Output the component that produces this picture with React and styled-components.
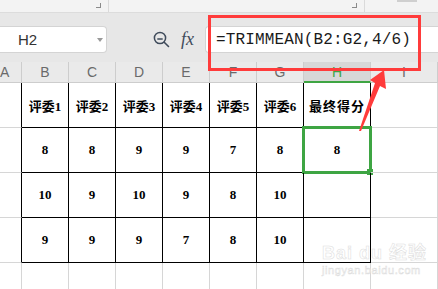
import React from "react";
import styled, { createGlobalStyle } from "styled-components";

const GlobalStyle = createGlobalStyle`
  html, body { margin: 0; padding: 0; background: #ffffff; }
  body { font-family: "Liberation Sans", Arial, sans-serif; }
`;

const Page = styled.div`
  position: relative;
  width: 438px;
  height: 289px;
  overflow: hidden;
  background: #ffffff;
`;

const TopStrip = styled.div`
  display: flex;
  height: 13px;
  box-sizing: border-box;
  background: #f3f3f3;
  border-bottom: 1px solid #dcdcdc;
`;

const RibbonGroup = styled.div`
  position: relative;
  width: ${(p) => p.$w}px;
  flex: none;
  box-sizing: border-box;
  border-right: ${(p) => (p.$divider ? "1px solid #dadada" : "none")};
  display: flex;
  justify-content: flex-end;
  align-items: flex-start;
  padding-right: 7px;
  padding-top: 3px;
`;

const LauncherMark = styled.span`
  width: 4px;
  height: 4px;
  border-right: 1px solid #8a8a8a;
  border-bottom: 1px solid #8a8a8a;
`;

const TopTab = styled.div`
  width: 20px;
  height: 2px;
  margin-left: 32px;
  background: #cfcfcf;
`;

const FormulaBar = styled.div`
  display: flex;
  align-items: flex-start;
  height: 49px;
  box-sizing: border-box;
  padding-top: 13px;
  background: #e7e7e7;
`;

const NameBox = styled.div`
  position: relative;
  width: 107px;
  height: 27px;
  box-sizing: border-box;
  background: #ffffff;
  border: 1px solid #d4d4d4;
  border-left: none;
  border-radius: 0 4px 4px 0;
  display: flex;
  align-items: center;
  padding-left: 18px;
  font-family: "Liberation Sans", Arial, sans-serif;
  font-size: 15px;
  color: #333;
`;

const DropArrow = styled.span`
  position: absolute;
  right: 3px;
  top: 11px;
  width: 0;
  height: 0;
  border-left: 3px solid transparent;
  border-right: 3px solid transparent;
  border-top: 4px solid #9a9a9a;
`;

const Tools = styled.div`
  display: flex;
  align-items: center;
  height: 27px;
  gap: 11px;
  padding-left: 46px;
  width: 98px;
  box-sizing: border-box;
  flex: none;
`;

const Fx = styled.span`
  font-family: "Liberation Serif", "Times New Roman", serif;
  font-style: italic;
  font-size: 18px;
  color: #3f4b5b;
  line-height: 1;
  margin-top: -2px;
`;

const FormulaInput = styled.div`
  flex: 1;
  height: 27px;
  box-sizing: border-box;
  background: #ffffff;
  border: 1px solid #d4d4d4;
  border-right: none;
  border-radius: 4px 0 0 4px;
  display: flex;
  align-items: center;
  padding-left: 10px;
  font-family: "Liberation Mono", "Courier New", monospace;
  font-size: 16px;
  letter-spacing: 0.15px;
  color: #1a1a1a;
  white-space: nowrap;
`;

const Sheet = styled.div`
  display: grid;
  grid-template-columns: 22px repeat(6, 47px) 67px 1fr;
  grid-auto-rows: 45px;
  grid-template-rows: 21px;
`;

const ColHead = styled.div`
  box-sizing: border-box;
  height: 21px;
  overflow: hidden;
  display: flex;
  align-items: center;
  justify-content: ${(p) => (p.$edge ? "flex-start" : "center")};
  padding-left: 0;
  background: ${(p) => (p.$active ? "#d7d7d7" : "#eaeaea")};
  color: ${(p) => (p.$active ? "#3ea543" : "#6a6a6a")};
  border-right: 1px solid #cdcdcd;
  border-bottom: ${(p) => (p.$active ? "2px solid #3ea543" : "1px solid #cdcdcd")};
  font-family: "Liberation Sans", Arial, sans-serif;
  font-size: 14px;
`;

const Cell = styled.div`
  position: relative;
  box-sizing: border-box;
  height: 45px;
  display: flex;
  align-items: center;
  justify-content: center;
  border-right: 1px solid ${(p) => (p.$blackR ? "#000" : "#d6d6d6")};
  border-bottom: 1px solid ${(p) => (p.$blackB ? "#000" : "#d6d6d6")};
  font-family: "Liberation Serif", "Noto Sans CJK SC", serif;
  font-weight: bold;
  font-size: 13px;
  color: #000;
  letter-spacing: ${(p) => (p.$wide ? "1px" : "0")};
`;

const Selection = styled.div`
  position: absolute;
  left: -2px;
  top: -2px;
  right: -2px;
  bottom: -2px;
  border: 3px solid #3ea543;
  pointer-events: none;
`;

const FillHandle = styled.div`
  position: absolute;
  right: -4px;
  bottom: -4px;
  width: 6px;
  height: 6px;
  background: #3ea543;
`;

const RedBox = styled.div`
  position: absolute;
  left: 208px;
  top: 15px;
  width: 213px;
  height: 56px;
  box-sizing: border-box;
  border: 3px solid #ff3b3b;
`;

const ArrowSvg = styled.svg`
  position: absolute;
  left: 0;
  top: 0;
  pointer-events: none;
`;

const Watermark = styled.div`
  position: absolute;
  left: 322px;
  top: 243px;
  display: flex;
  flex-direction: column;
  align-items: flex-start;
  gap: 1px;
  color: #ffffff;
  -webkit-text-stroke: 0.5px #dcdcdc;
  font-family: "Liberation Sans", "Noto Sans CJK SC", sans-serif;
`;

const MarkTop = styled.div`
  font-size: 18px;
  font-weight: bold;
  letter-spacing: 1px;
  line-height: 20px;
`;

const MarkUrl = styled.div`
  font-size: 11px;
  line-height: 12px;
  letter-spacing: 0.6px;
`;

const heads = ["B", "C", "D", "E", "F", "G", "H", "I"];
const rows = [
  ["评委1", "评委2", "评委3", "评委4", "评委5", "评委6", "最终得分"],
  ["8", "8", "9", "9", "7", "8", "8"],
  ["10", "9", "10", "9", "8", "10", ""],
  ["9", "9", "9", "7", "8", "10", ""],
];

function ZoomIcon() {
  return (
    <svg width="17" height="17" viewBox="0 0 17 17" fill="none">
      <circle cx="7" cy="7" r="5.6" stroke="#3f4b5b" strokeWidth="1.5" />
      <line x1="4.3" y1="8" x2="9.7" y2="8" stroke="#3f4b5b" strokeWidth="1.5" />
      <line x1="11.2" y1="11.2" x2="15.5" y2="15.5" stroke="#3f4b5b" strokeWidth="1.6" strokeLinecap="round" />
    </svg>
  );
}

export default function App() {
  return (
    <Page>
      <GlobalStyle />
      <TopStrip>
        <RibbonGroup $w={109} $divider>
          <LauncherMark />
        </RibbonGroup>
        <RibbonGroup $w={256} $divider>
          <LauncherMark />
        </RibbonGroup>
        <TopTab />
      </TopStrip>
      <FormulaBar>
        <NameBox>
          H2
          <DropArrow />
        </NameBox>
        <Tools>
          <ZoomIcon />
          <Fx>fx</Fx>
        </Tools>
        <FormulaInput>=TRIMMEAN(B2:G2,4/6)</FormulaInput>
      </FormulaBar>
      <Sheet>
        <ColHead $edge>A</ColHead>
        {heads.map((h) => (
          <ColHead key={h} $active={h === "H"}>
            {h}
          </ColHead>
        ))}
        {rows.map((r, ri) => (
          <React.Fragment key={ri}>
            <Cell $blackR />
            {r.map((v, ci) => (
              <Cell key={ci} $blackR $blackB $wide={v === "最终得分"}>
                {v}
                {ri === 1 && ci === 6 && (
                  <Selection>
                    <FillHandle />
                  </Selection>
                )}
              </Cell>
            ))}
            <Cell />
          </React.Fragment>
        ))}
        <Cell />
        {heads.map((h) => (
          <Cell key={h} />
        ))}
      </Sheet>
      <RedBox />
      <ArrowSvg width="438" height="289" viewBox="0 0 438 289">
        <polygon
          points="384,70 370,80 375,83 359,131 361,131 380,86 386,89"
          fill="#ff3b3b"
        />
      </ArrowSvg>
      <Watermark>
        <MarkTop>Bai du 经验</MarkTop>
        <MarkUrl>jingyan.baidu.com</MarkUrl>
      </Watermark>
    </Page>
  );
}
